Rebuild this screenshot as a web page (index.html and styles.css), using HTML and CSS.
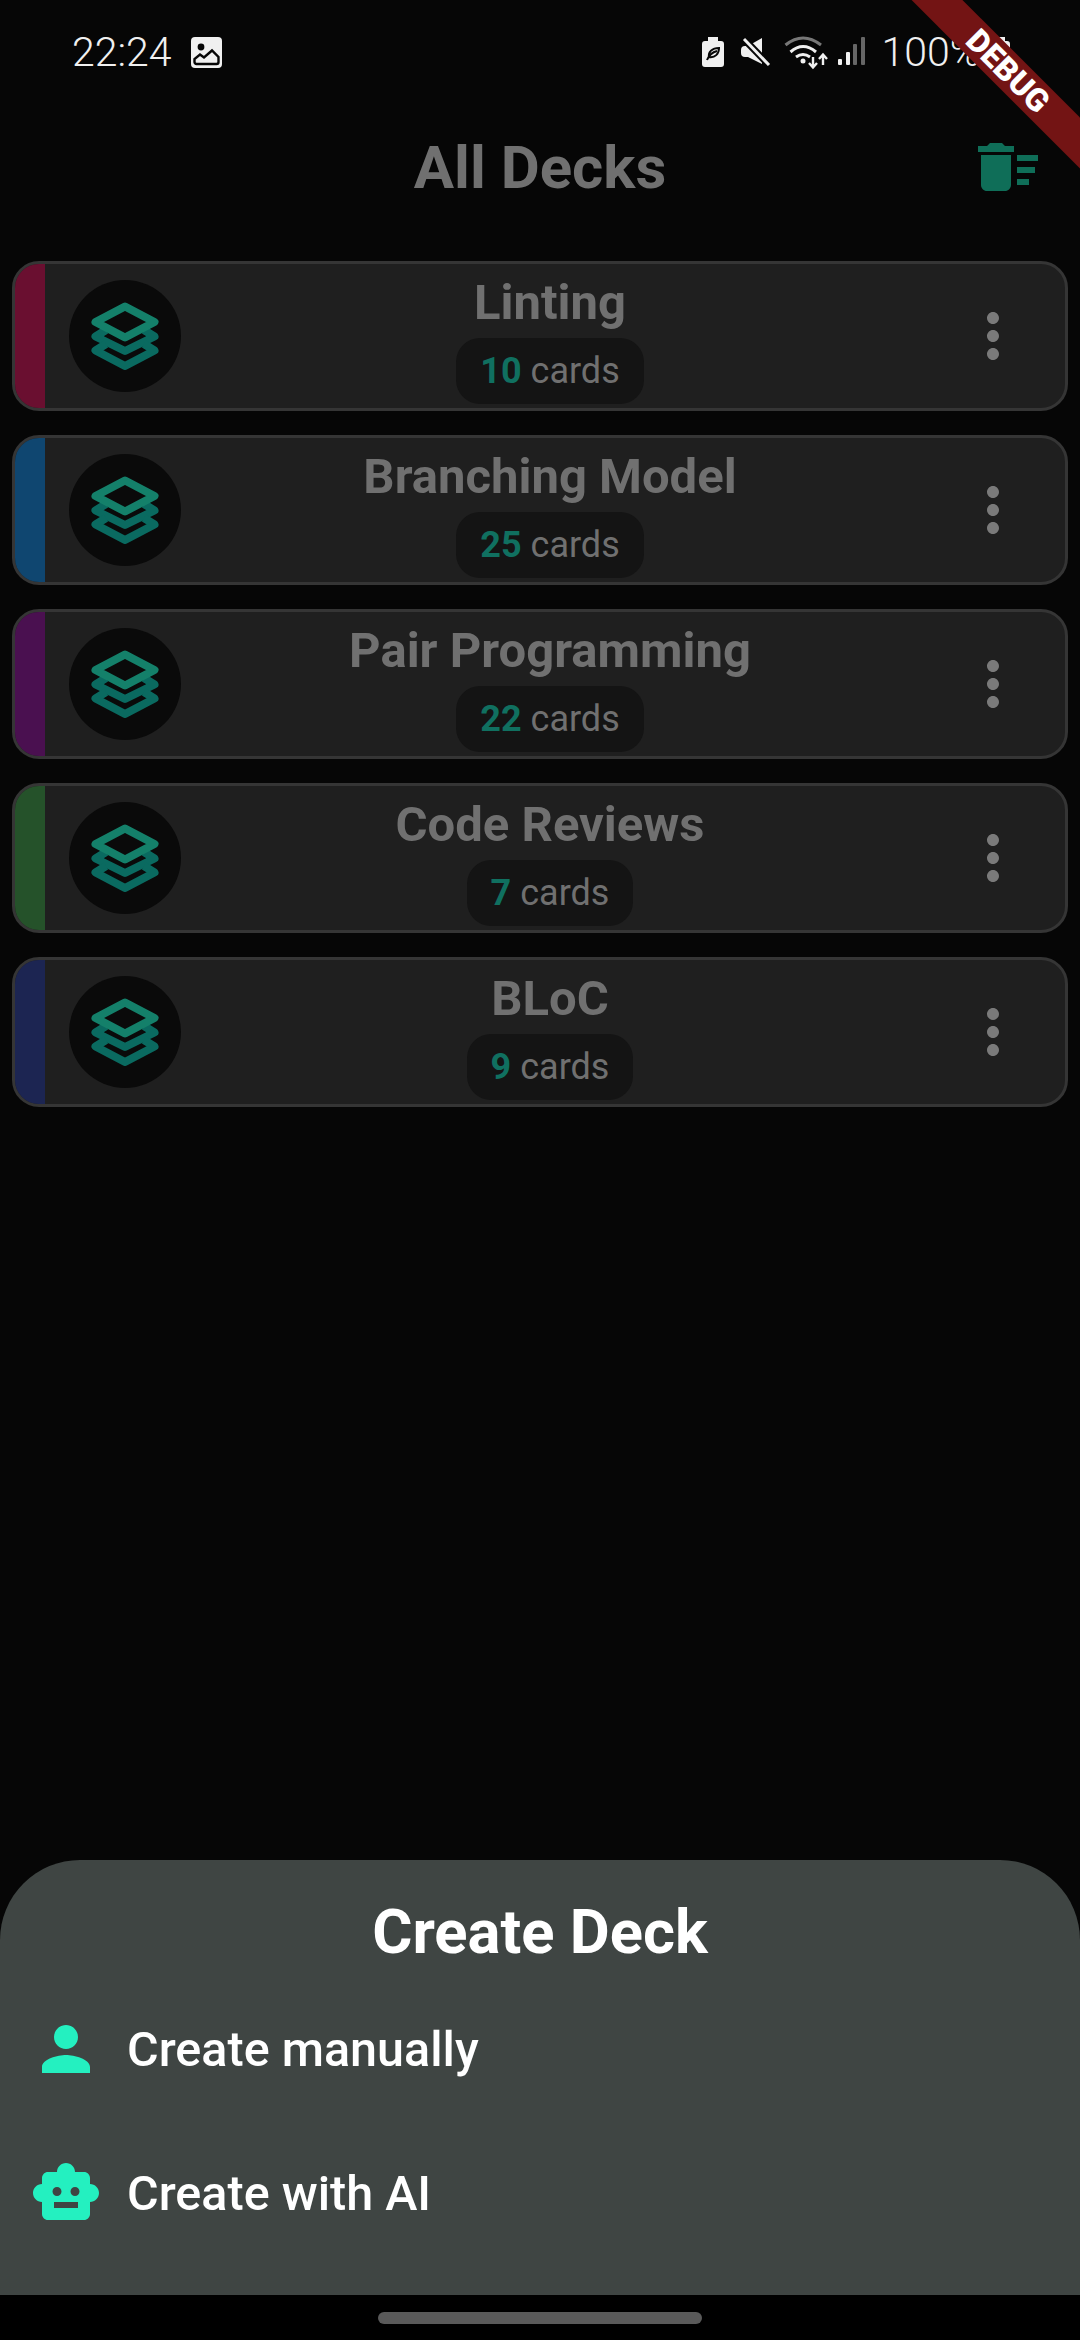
FILE: index.html
```html
<!DOCTYPE html>
<html>
<head>
    <title>All Decks</title>
    <link rel="stylesheet" href="styles.css">
</head>
<body>

<svg class="defs" width="0" height="0">
    <symbol id="layers" viewBox="0 0 68 68">
        <path class="layer-low" d="M15 28L4.5 34.5L34 49L63.5 34.5L53 28"/>
        <path class="layer-low" d="M15 42L4.5 48.5L34 64L63.5 48.5L53 42"/>
        <path class="layer-top" d="M4.5 20L34 4.5L63.5 20L34 35.5Z"/>
    </symbol>
    <symbol id="dots" viewBox="0 0 24 24">
        <path d="M12 8c1.1 0 2-.9 2-2s-.9-2-2-2-2 .9-2 2 .9 2 2 2zm0 2c-1.1 0-2 .9-2 2s.9 2 2 2 2-.9 2-2-.9-2-2-2zm0 6c-1.1 0-2 .9-2 2s.9 2 2 2 2-.9 2-2-.9-2-2-2z"/>
    </symbol>
</svg>

<div class="status-bar">
    <div class="status-left">
        <span class="status-text">22:24</span>
        <svg class="ic-image" width="31" height="31" viewBox="0 0 31 31">
            <rect width="31" height="31" rx="4" fill="#f0f0f0"/>
            <circle cx="10" cy="10" r="3.4" fill="#060606"/>
            <path d="M3.5 25V22L9 17.5L13 20.5L21 13.5L27.5 20V25A2 2 0 0 1 25.5 27H5.5A2 2 0 0 1 3.5 25Z" fill="none" stroke="#060606" stroke-width="2.4"/>
        </svg>
    </div>
    <div class="status-right">
        <svg class="ic-battery" width="22" height="30" viewBox="0 0 22 30">
            <path d="M6 0H16V4H19A3 3 0 0 1 22 7V27A3 3 0 0 1 19 30H3A3 3 0 0 1 0 27V7A3 3 0 0 1 3 4H6Z" fill="#f0f0f0"/>
            <path d="M5 23C7 18 11 15 15 14M7 20C6 15 10 11 17 11C17 17 13 21 7 20Z" fill="none" stroke="#060606" stroke-width="2"/>
        </svg>
        <svg class="ic-mute" width="32" height="32" viewBox="0 0 32 32">
            <path d="M2 14Q2 10 6 10H9L23 2V28L9 21H6Q2 21 2 17Z" fill="#f0f0f0"/>
            <path d="M4 2L30 29" stroke="#060606" stroke-width="7"/>
            <path d="M5 3L30 29" stroke="#f0f0f0" stroke-width="3"/>
        </svg>
        <svg class="ic-wifi" width="50" height="37" viewBox="0 0 50 37" fill="none" stroke-width="3">
            <path d="M4.5 11Q22 -3 40 11" stroke="#777"/>
            <path d="M9.5 18Q22 7 35 18" stroke="#f0f0f0"/>
            <path d="M15 23Q22 18 29 23" stroke="#f0f0f0"/>
            <circle cx="22" cy="27" r="2.5" fill="#f0f0f0"/>
            <path d="M32 23V33M28 29L32 33.5L36 29" stroke="#f0f0f0" stroke-width="2.4"/>
            <path d="M42 31V21M38 25L42 20.5L46 25" stroke="#f0f0f0" stroke-width="2.4"/>
        </svg>
        <svg class="ic-signal" width="31" height="30" viewBox="0 0 31 30">
            <rect x="2" y="22" width="4" height="6" rx="1" fill="#f0f0f0"/>
            <rect x="10" y="15" width="4" height="13" rx="1" fill="#f0f0f0"/>
            <rect x="17" y="7" width="4" height="21" rx="1" fill="#666"/>
            <rect x="25" y="0" width="4" height="28" rx="1" fill="#666"/>
        </svg>
        <span class="status-text">100%</span>
        <svg class="ic-battery-full" width="20" height="30" viewBox="0 0 20 30">
            <path d="M5 0H15V4H17A3 3 0 0 1 20 7V27A3 3 0 0 1 17 30H3A3 3 0 0 1 0 27V7A3 3 0 0 1 3 4H5Z" fill="#f0f0f0"/>
        </svg>
    </div>
</div>

<div class="header">
    <h1 class="page-title">All Decks</h1>
    <svg class="ic-sweep" width="72" height="72" viewBox="0 0 24 24">
        <path d="M15 16h4v2h-4zm0-8h7v2h-7zm0 4h6v2h-6zM3 18c0 1.1.9 2 2 2h6c1.1 0 2-.9 2-2V8H3v10zM14 5h-3l-1-1H6L5 5H2v2h12z"/>
    </svg>
</div>

<div class="deck-list">
    <div class="deck">
        <div class="deck-bar bar-crimson"></div>
        <div class="deck-icon"><svg width="68" height="68"><use href="#layers"/></svg></div>
        <div class="deck-body">
            <div class="deck-name">Linting</div>
            <div class="deck-count"><b>10</b> cards</div>
        </div>
        <svg class="deck-menu" width="72" height="72"><use href="#dots"/></svg>
    </div>
    <div class="deck">
        <div class="deck-bar bar-blue"></div>
        <div class="deck-icon"><svg width="68" height="68"><use href="#layers"/></svg></div>
        <div class="deck-body">
            <div class="deck-name">Branching Model</div>
            <div class="deck-count"><b>25</b> cards</div>
        </div>
        <svg class="deck-menu" width="72" height="72"><use href="#dots"/></svg>
    </div>
    <div class="deck">
        <div class="deck-bar bar-purple"></div>
        <div class="deck-icon"><svg width="68" height="68"><use href="#layers"/></svg></div>
        <div class="deck-body">
            <div class="deck-name">Pair Programming</div>
            <div class="deck-count"><b>22</b> cards</div>
        </div>
        <svg class="deck-menu" width="72" height="72"><use href="#dots"/></svg>
    </div>
    <div class="deck">
        <div class="deck-bar bar-green"></div>
        <div class="deck-icon"><svg width="68" height="68"><use href="#layers"/></svg></div>
        <div class="deck-body">
            <div class="deck-name">Code Reviews</div>
            <div class="deck-count"><b>7</b> cards</div>
        </div>
        <svg class="deck-menu" width="72" height="72"><use href="#dots"/></svg>
    </div>
    <div class="deck">
        <div class="deck-bar bar-indigo"></div>
        <div class="deck-icon"><svg width="68" height="68"><use href="#layers"/></svg></div>
        <div class="deck-body">
            <div class="deck-name">BLoC</div>
            <div class="deck-count"><b>9</b> cards</div>
        </div>
        <svg class="deck-menu" width="72" height="72"><use href="#dots"/></svg>
    </div>
</div>

<div class="sheet">
    <h2 class="sheet-title">Create Deck</h2>
    <div class="sheet-row">
        <svg width="72" height="72" viewBox="0 0 24 24">
            <path d="M12 12c2.21 0 4-1.79 4-4s-1.79-4-4-4-4 1.79-4 4 1.79 4 4 4zm0 2c-2.67 0-8 1.34-8 4v2h16v-2c0-2.66-5.33-4-8-4z"/>
        </svg>
        <span>Create manually</span>
    </div>
    <div class="sheet-row">
        <svg width="72" height="72" viewBox="0 0 24 24">
            <path d="M20 9V7c0-1.1-.9-2-2-2h-3c0-1.66-1.34-3-3-3S9 3.34 9 5H6c-1.1 0-2 .9-2 2v2c-1.66 0-3 1.34-3 3s1.34 3 3 3v4c0 1.1.9 2 2 2h12c1.1 0 2-.9 2-2v-4c1.66 0 3-1.34 3-3s-1.34-3-3-3zM7.5 11.5c0-.83.67-1.5 1.5-1.5s1.5.67 1.5 1.5S9.83 13 9 13s-1.5-.67-1.5-1.5zM16 17H8v-2h8v2zm-1-4c-.83 0-1.5-.67-1.5-1.5S14.17 10 15 10s1.5.67 1.5 1.5S15.83 13 15 13z"/>
        </svg>
        <span>Create with AI</span>
    </div>
</div>

<div class="nav-bar"><div class="nav-handle"></div></div>

<div class="debug-banner">DEBUG</div>

</body>
</html>
```

FILE: styles.css
```css
body {
    margin: 0;
    height: 2340px;
    display: flex;
    flex-direction: column;
    overflow: hidden;
    position: relative;
    background-color: #060606;
    font-family: Roboto, sans-serif;
}

.defs {
    position: absolute;
}

/* status bar */
.status-bar {
    height: 104px;
    flex-shrink: 0;
    display: flex;
    justify-content: space-between;
    align-items: center;
    padding: 0 70px 0 72px;
}

.status-left,
.status-right {
    display: flex;
    align-items: center;
}

.status-text {
    font-size: 41px;
    font-weight: 350;
    color: #f0f0f0;
}

.ic-image {
    margin-left: 19px;
}

.ic-mute {
    margin-left: 15px;
}

.ic-wifi {
    margin-left: 10px;
}

.ic-signal {
    margin-left: 5px;
}

.status-right .status-text {
    margin-left: 14px;
}

.ic-battery-full {
    margin-left: 10px;
}

/* header */
.header {
    height: 126px;
    flex-shrink: 0;
    display: grid;
    grid-template-columns: 1fr auto 1fr;
    align-items: center;
    padding-right: 36px;
    padding-left: 36px;
}

.page-title {
    grid-column: 2;
    margin: 0;
    font-size: 60px;
    font-weight: 700;
    color: #707070;
}

.ic-sweep {
    grid-column: 3;
    justify-self: end;
    fill: #0f6e58;
}

/* deck cards */
.deck-list {
    display: flex;
    flex-direction: column;
    gap: 24px;
    padding: 31px 12px 0;
}

.deck {
    height: 150px;
    box-sizing: border-box;
    display: flex;
    align-items: center;
    border: 3px solid #353535;
    border-radius: 27px;
    background-color: #1f1f1f;
    overflow: hidden;
}

.deck-bar {
    width: 30px;
    align-self: stretch;
    flex-shrink: 0;
}

.bar-crimson { background-color: #6a0f30; }
.bar-blue { background-color: #0f4670; }
.bar-purple { background-color: #4a1050; }
.bar-green { background-color: #25522a; }
.bar-indigo { background-color: #1c2552; }

.deck-icon {
    width: 112px;
    height: 112px;
    margin-left: 24px;
    flex-shrink: 0;
    display: flex;
    align-items: center;
    justify-content: center;
    border-radius: 50%;
    background-color: #0a0a0a;
}

.layer-top,
.layer-low {
    fill: none;
    stroke-width: 8;
    stroke-linejoin: round;
}

.layer-top {
    stroke: #14806a;
}

.layer-low {
    stroke: #0a6a60;
}

.deck-body {
    flex: 1;
    display: flex;
    flex-direction: column;
    align-items: center;
    padding: 4px 38px 0 0;
}

.deck-name {
    font-size: 49px;
    font-weight: 700;
    line-height: 60px;
    color: #707070;
}

.deck-count {
    height: 66px;
    box-sizing: border-box;
    margin-top: 5px;
    padding: 0 24px;
    display: flex;
    align-items: center;
    gap: 9px;
    border-radius: 24px;
    background-color: #141414;
    font-size: 36px;
    color: #707070;
}

.deck-count b {
    font-weight: 700;
    color: #107060;
}

.deck-menu {
    margin-right: 36px;
    flex-shrink: 0;
    fill: #7a7a7a;
}

/* bottom sheet */
.sheet {
    margin-top: auto;
    height: 435px;
    box-sizing: border-box;
    flex-shrink: 0;
    padding-bottom: 30px;
    border-radius: 80px 80px 0 0;
    background-color: #3f4543;
}

.sheet-title {
    margin: 0;
    padding: 31px 0 4px;
    line-height: 82px;
    text-align: center;
    font-size: 61.5px;
    font-weight: 700;
    color: #fff;
}

.sheet-row {
    height: 144px;
    display: flex;
    align-items: center;
    gap: 25px;
    padding-left: 30px;
    font-size: 48.5px;
    font-weight: 500;
    color: #fff;
}

.sheet-row svg {
    fill: #24f0c0;
}

/* nav bar */
.nav-bar {
    height: 45px;
    flex-shrink: 0;
    display: flex;
    justify-content: center;
    padding-top: 17px;
    box-sizing: border-box;
    background-color: #000;
}

.nav-handle {
    width: 324px;
    height: 12px;
    border-radius: 6px;
    background-color: #5a5a5a;
}

/* debug ribbon, lies over the status bar */
.debug-banner {
    position: absolute;
    top: 53px;
    left: 858px;
    width: 300px;
    height: 36px;
    line-height: 36px;
    text-align: center;
    transform: rotate(45deg);
    background-color: #731414;
    color: #fff;
    font-size: 32px;
    font-weight: 900;
}
```
